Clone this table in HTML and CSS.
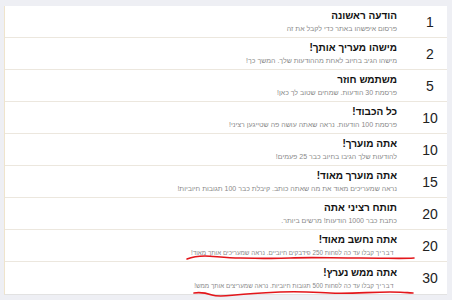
FILE: index.html
```html
<!DOCTYPE html>
<html lang="he" dir="rtl">
<head>
<meta charset="utf-8">
<title>דרגות</title>
<link rel="stylesheet" href="styles.css">
</head>
<body>
<div class="card">
  <div class="row"><div class="num">1</div><div class="info"><div class="title">הודעה ראשונה</div><div class="desc">פרסום איפשהו באתר כדי לקבל את זה</div></div></div>
  <div class="row"><div class="num">2</div><div class="info"><div class="title">מישהו מעריך אותך!</div><div class="desc">מישהו הגיב בחיוב לאחת מההודעות שלך. המשך כך!</div></div></div>
  <div class="row"><div class="num">5</div><div class="info"><div class="title">משתמש חוזר</div><div class="desc">פרסמת 30 הודעות. שמחים שטוב לך כאן!</div></div></div>
  <div class="row"><div class="num">10</div><div class="info"><div class="title">כל הכבוד!</div><div class="desc">פרסמת 100 הודעות. נראה שאתה עושה פה שטייגען רציני!</div></div></div>
  <div class="row"><div class="num">10</div><div class="info"><div class="title">אתה מוערך!</div><div class="desc">להודעות שלך הגיבו בחיוב כבר 25 פעמים!</div></div></div>
  <div class="row"><div class="num">15</div><div class="info"><div class="title">אתה מוערך מאוד!</div><div class="desc">נראה שמעריכים מאוד את מה שאתה כותב. קיבלת כבר 100 תגובות חיוביות!</div></div></div>
  <div class="row"><div class="num">20</div><div class="info"><div class="title">תותח רציני אתה</div><div class="desc">כתבת כבר 1000 הודעות! מרשים ביותר.</div></div></div>
  <div class="row"><div class="num">20</div><div class="info"><div class="title">אתה נחשב מאוד!</div><div class="desc small"><span class="spaced">דבריך</span> קבלו עד כה לפחות 250 פידבקים חיוביים. נראה שמעריכים אותך מאוד!</div></div></div>
  <div class="row"><div class="num">30</div><div class="info"><div class="title">אתה ממש נערץ!</div><div class="desc small"><span class="spaced">דבריך</span> קבלו עד כה לפחות 500 תגובות חיוביות. נראה שמעריצים אותך ממש!</div></div></div>
</div>
<svg class="marks" width="452" height="300" viewBox="0 0 452 300" aria-hidden="true">
  <path d="M187 259 C 192 257, 197 256, 205 256 S 225 258, 240 258 S 270 259, 290 258 S 330 258, 360 258 S 400 259, 414 258" />
  <path d="M194 293 C 200 292, 206 293, 212 295 S 225 296, 235 295 S 260 293, 280 292 S 310 292, 330 293 S 370 292, 390 292 S 405 293, 413 293" />
</svg>
</body>
</html>
```

FILE: styles.css
```css
html, body {
  margin: 0;
  background: #eeeff4;
  direction: rtl;
  font-family: "Liberation Sans", Arial, "DejaVu Sans", sans-serif;
}
body {
  width: 452px;
  height: 300px;
  overflow: hidden;
  position: relative;
}
.card {
  margin: 6px 5px 0 4px;
  background: #ffffff;
  border-left: 1px solid #efe4cc;
  border-bottom: 1px solid #e2e2e2;
}
.row {
  display: flex;
  align-items: center;
  height: 31px;
  border-bottom: 1px solid #ece7de;
}
.row:last-child {
  border-bottom: none;
  height: 32px;
}
.num {
  width: 34px;
  flex: none;
  text-align: center;
  font-size: 14px;
  color: #222;
  direction: ltr;
}
.info {
  padding-right: 16px;
  white-space: nowrap;
}
.title {
  font-size: 10px;
  font-weight: bold;
  color: #111;
  line-height: 12px;
}
.desc {
  margin-top: 2px;
  font-size: 7px;
  line-height: 9px;
  color: #8a8a8a;
}
.desc.small {
  font-size: 6.3px;
  padding-right: 3px;
}
.spaced {
  letter-spacing: 0.6px;
}
.marks {
  position: absolute;
  left: 0;
  top: 0;
  pointer-events: none;
}
.marks path {
  fill: none;
  stroke: #e3161b;
  stroke-width: 1.6;
  stroke-linecap: round;
}
```
